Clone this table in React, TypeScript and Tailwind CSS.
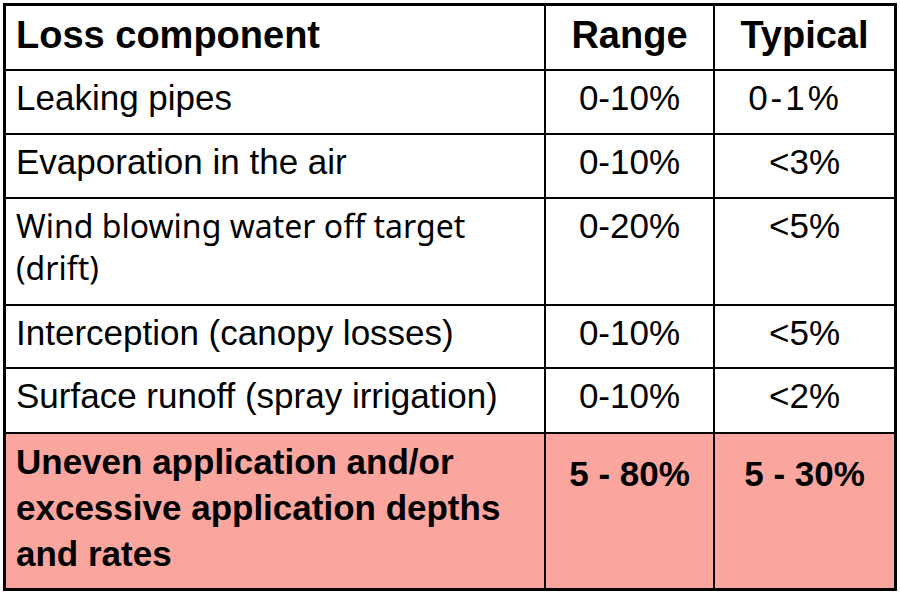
import React from 'react'

const rows = [
  { loss: 'Leaking pipes', range: '0-10%', typical: '0-1%', h: 'h-[62px]', tp: 'pr-[19px] tracking-[3px]' },
  { loss: 'Evaporation in the air', range: '0-10%', typical: '<3%', h: 'h-[62px]', tp: '' },
  { loss: 'Wind blowing water off target (drift)', range: '0-20%', typical: '<5%', h: 'h-[105px]', tp: '', alt: true },
  { loss: 'Interception (canopy losses)', range: '0-10%', typical: '<5%', h: 'h-[61px]', tp: '' },
  { loss: 'Surface runoff (spray irrigation)', range: '0-10%', typical: '<2%', h: 'h-[63px]', tp: '' },
]

const App = () => {
  return (
    <div className="w-[900px] h-[592px] bg-white overflow-hidden pt-[3px] pl-[3px]" style={{ fontFamily: '"Liberation Sans", Arial, sans-serif' }}>
      <div className="w-[894px] border-[3px] border-black bg-black grid grid-cols-[538px_167px_179px] gap-[2px] text-[35px] leading-[42px] text-black">
        {/* header */}
        <div className="bg-white h-[63px] pl-[10px] pt-[8px] font-bold text-[38px]">Loss component</div>
        <div className="bg-white h-[63px] pt-[8px] font-bold text-[38px] text-center">Range</div>
        <div className="bg-white h-[63px] pt-[8px] font-bold text-[38px] text-center">Typical</div>

        {rows.map((r) => (
          <React.Fragment key={r.loss}>
            <div
              className={`bg-white ${r.h} pl-[10px] pt-[6px] ${r.alt ? 'pr-[60px] text-[32px]' : ''}`}
              style={r.alt ? { fontFamily: '"Noto Sans", "Open Sans", sans-serif' } : undefined}
            >
              {r.loss}
            </div>
            <div className={`bg-white ${r.h} pt-[6px] text-center`}>{r.range}</div>
            <div className={`bg-white ${r.h} pt-[6px] text-center ${r.tp}`}>{r.typical}</div>
          </React.Fragment>
        ))}

        {/* highlighted row */}
        <div className="bg-[#faa69e] h-[154px] pl-[10px] pt-[5px] font-bold leading-[46px]">
          Uneven application and/or excessive application depths and rates
        </div>
        <div className="bg-[#faa69e] h-[154px] pt-[17px] font-bold leading-[46px] text-center">5 - 80%</div>
        <div className="bg-[#faa69e] h-[154px] pt-[17px] font-bold leading-[46px] text-center">5 - 30%</div>
      </div>
    </div>
  )
}

export default App
